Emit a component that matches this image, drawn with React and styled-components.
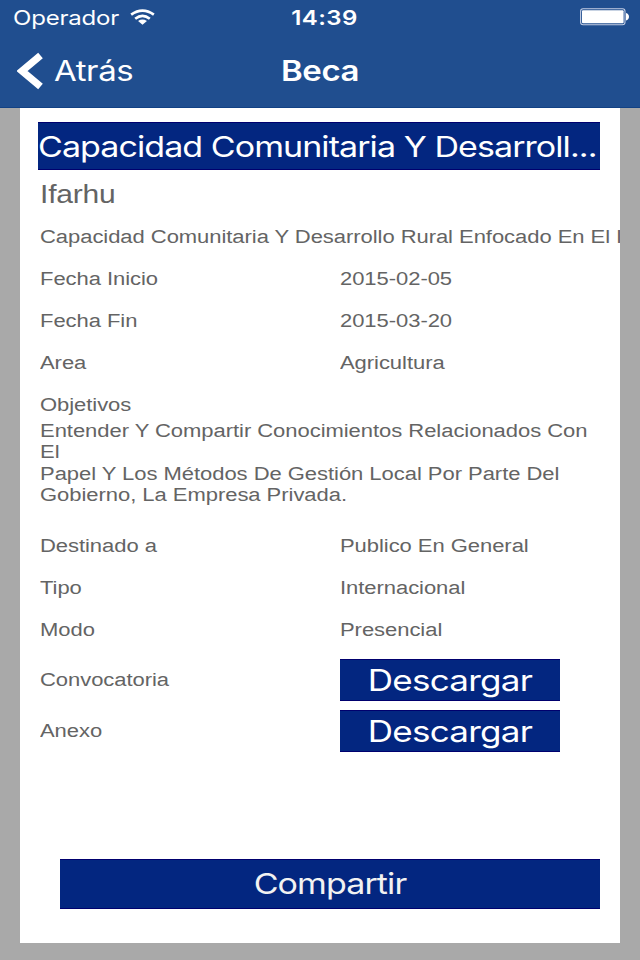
import React from 'react'
import styled, { createGlobalStyle } from 'styled-components';

const GlobalStyle = createGlobalStyle`
* {
  box-sizing: border-box;
}

body {
  margin: 0;
  background: #a9a9a9;
}
`;

const squash = 0.845;
const helvetica = '"Liberation Sans", Arial, sans-serif';
const system = 'Inter, "Liberation Sans", sans-serif';

const Screen = styled.div`
display: flex;
flex-direction: column;
width: 640px;
height: 960px;
overflow: hidden;
background: #a9a9a9;
`;

const Header = styled.header`
flex: none;
height: 108px;
background: #204e8f;
border-bottom: 1px solid #124184;
color: white;
`;

const StatusBar = styled.div`
display: grid;
grid-template-columns: 1fr auto 1fr;
align-items: center;
height: 34px;
padding: 0 11px 0 12px;
`;

const NavBar = styled.div`
display: grid;
grid-template-columns: 1fr auto 1fr;
align-items: center;
height: 74px;
padding: 0 17px;
`;

const Group = styled.div`
display: flex;
align-items: center;
gap: ${p => p.$gap || 0}px;
justify-content: ${p => p.$end ? 'flex-end' : 'flex-start'};
`;

const Label = styled.span`
display: block;
font-family: ${p => p.$system ? system : helvetica};
font-size: ${p => p.$size || 22}px;
font-weight: ${p => p.$weight || 400};
letter-spacing: ${p => p.$spacing || -0.05}px;
line-height: 1;
white-space: nowrap;
transform: scaleY(${squash});
`;

const Carrier = styled(Label)`
padding: 1px 0 0 1px;
`;

const Clock = styled(Label)`
padding: 1px 0 0 8px;
`;

const Card = styled.main`
display: flex;
flex-direction: column;
flex: none;
width: 600px;
height: 835px;
margin: 0 20px;
padding-top: 14px;
overflow: hidden;
background: white;
color: #646464;
`;

const Bar = styled.div`
display: flex;
align-items: center;
justify-content: center;
flex: none;
border: solid #00006e;
border-width: 1px 0;
background: #032680;
color: white;
`;

const Title = styled(Bar)`
justify-content: flex-start;
width: 562px;
height: 48.4px;
margin-left: 18px;
padding-top: 2px;
`;

const DownloadButton = styled(Bar).attrs({ as: 'button' })`
width: 220px;
height: 42px;
padding: 1px 0 0;
`;

const ShareButton = styled(Bar).attrs({ as: 'button' })`
width: 540px;
height: 50px;
margin: 106.4px 0 0 40px;
padding: 0;
color: #f2f2f2;
`;

const Row = styled.div`
display: grid;
grid-template-columns: 300px 1fr;
align-items: center;
flex: none;
height: ${p => p.$height || 42.2}px;
padding-left: 20px;
`;

const Provider = styled(Row)`
padding-top: 4px;
`;

const Goals = styled.div`
flex: none;
height: 98.2px;
padding-left: 20px;
`;

const GoalsText = styled.p`
width: 570px;
margin: -6.4px 0 0;
font-family: ${helvetica};
font-size: 22px;
line-height: 25.4px;
letter-spacing: -0.04px;
white-space: pre-line;
transform: scaleY(${squash});
transform-origin: top;
`;

const BackIcon = () => (
  <svg width="26" height="38" viewBox="0 0 26 38">
    <path d="M23.5 3.4 L5 19 L23.5 34.6" fill="none" stroke="white" strokeWidth="7.2" />
  </svg>
)

const WifiIcon = () => (
  <svg width="25" height="16" viewBox="0 0 26 16" fill="none" stroke="white" strokeWidth="2.8">
    <path d="M1.2 5.6 Q13 -2.8 24.8 5.6" />
    <path d="M5.4 9.8 Q13 3.8 20.6 9.8" />
    <path d="M13 16 L8.4 12.2 Q13 9.2 17.6 12.2 Z" fill="white" stroke="none" />
  </svg>
)

const BatteryIcon = () => (
  <svg width="49" height="18" viewBox="0 0 49 18">
    <rect x="0.6" y="0.8" width="44.4" height="16" rx="2.5" fill="none" stroke="#c3cde4" strokeWidth="1.1" />
    <rect x="2" y="2.2" width="41.6" height="13" rx="1" fill="white" />
    <path d="M46 5 Q49 6 49 8.8 Q49 11.6 46 12.6 Z" fill="white" />
  </svg>
)

const dates = [
  ['Fecha Inicio', '2015-02-05'],
  ['Fecha Fin', '2015-03-20'],
  ['Area', 'Agricultura'],
];

const details = [
  ['Destinado a', 'Publico En General'],
  ['Tipo', 'Internacional'],
  ['Modo', 'Presencial'],
];

const goals = `Entender Y Compartir Conocimientos Relacionados Con
El
Papel Y Los Métodos De Gestión Local Por Parte Del
Gobierno, La Empresa Privada.`;

const Rows = ({items}) => items.map(([name, value]) => (
  <Row key={name}>
    <Label>{name}</Label>
    <Label>{value}</Label>
  </Row>
))

export default function App() {
  return (
    <Screen>
      <GlobalStyle/>
      <Header>
        <StatusBar>
          <Group $gap={11}>
            <Carrier $system $size={24} $spacing={-0.2}>Operador</Carrier>
            <WifiIcon/>
          </Group>
          <Clock $system $size={24} $weight={600} $spacing={0.4}>14:39</Clock>
          <Group $end>
            <BatteryIcon/>
          </Group>
        </StatusBar>
        <NavBar>
          <Group $gap={11}>
            <BackIcon/>
            <Label $system $size={33} $spacing={-0.4}>Atrás</Label>
          </Group>
          <Label $system $size={33} $weight={600} $spacing={-0.5}>Beca</Label>
          <span/>
        </NavBar>
      </Header>
      <Card>
        <Title>
          <Label $system $size={34} $spacing={-0.93}>Capacidad Comunitaria Y Desarroll...</Label>
        </Title>
        <Provider $height={45.2}>
          <Label $size={30} $spacing={-0.2}>Ifarhu</Label>
        </Provider>
        <Row>
          <Label>Capacidad Comunitaria Y Desarrollo Rural Enfocado En El I</Label>
        </Row>
        <Rows items={dates}/>
        <Row>
          <Label>Objetivos</Label>
        </Row>
        <Goals>
          <GoalsText>{goals}</GoalsText>
        </Goals>
        <Rows items={details}/>
        <Row $height={58}>
          <Label>Convocatoria</Label>
          <DownloadButton><Label $system $size={35} $spacing={-0.75}>Descargar</Label></DownloadButton>
        </Row>
        <Row $height={43.4}>
          <Label>Anexo</Label>
          <DownloadButton><Label $system $size={35} $spacing={-0.75}>Descargar</Label></DownloadButton>
        </Row>
        <ShareButton><Label $system $size={34} $spacing={-0.9}>Compartir</Label></ShareButton>
      </Card>
    </Screen>
  )
}
